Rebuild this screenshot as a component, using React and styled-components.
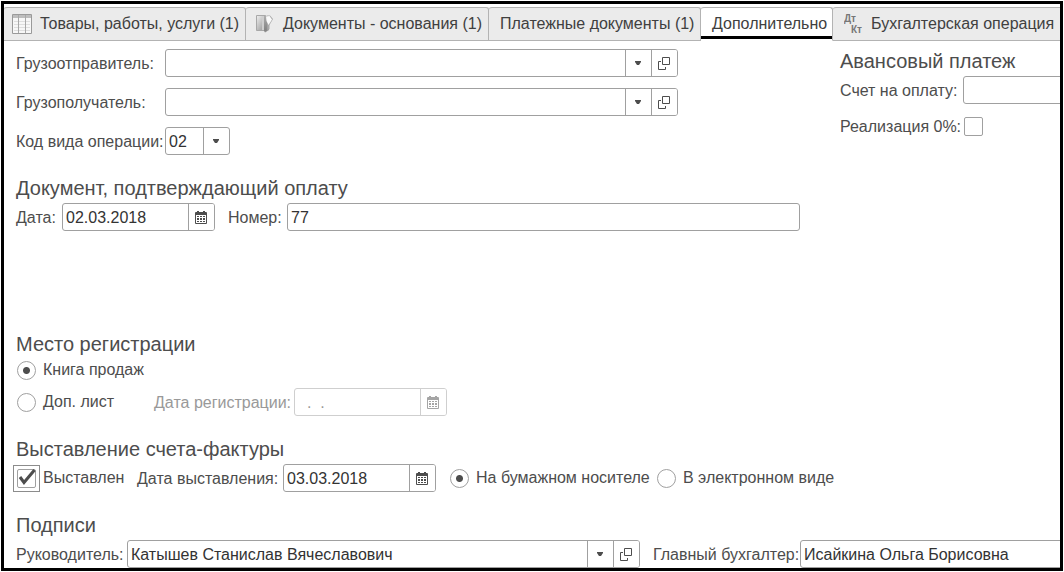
import React from "react";
import styled, { createGlobalStyle, css } from "styled-components";

const line = "#a0a0a0";
const tabLine = "#b3b3b3";
const ink = "#4d4d4d";

const GlobalStyle = createGlobalStyle`
  *, *::before, *::after { box-sizing: border-box; }
  body {
    margin: 0;
    background: #fff;
    color: ${ink};
    font: 16px/20px "Liberation Sans", Arial, sans-serif;
  }
  input, select, button { font: inherit; color: inherit; margin: 0; }
`;

const Frame = styled.main`
  margin: 1px;
  border: 3px solid #000;
  padding-top: 3px;
  overflow: hidden;
`;

const Tabs = styled.nav`
  display: flex;
  height: 34px;
  background: #ebebeb;
`;

const Tab = styled.button`
  display: flex;
  align-items: center;
  flex: none;
  gap: 8px;
  width: ${(p) => p.$w}px;
  padding: 0 0 0 ${(p) => (p.$icon ? 8 : 11)}px;
  border: 1px solid ${tabLine};
  border-left: 0;
  border-radius: 3px 3px 0 0;
  background: #ebebeb;
  color: #404040;
  white-space: nowrap;
  ${(p) =>
    p.$active &&
    css`
      background: #fff;
      border-bottom-color: #fff;
      box-shadow: inset 0 -1px #fff, inset 0 -4px #000;
    `}
`;

const Body = styled.form`
  display: flex;
  flex-direction: column;
  gap: 21px;
  padding: 8px 0 0 12px;
`;

const Top = styled.div`
  display: grid;
  grid-template-columns: minmax(0, 785px) 220px;
  column-gap: 39px;
`;

const Stack = styled.div`
  display: flex;
  flex-direction: column;
  gap: ${(p) => p.$gap || 0}px;
`;

const Section = styled.section`
  margin-bottom: ${(p) => (p.$spacious ? 80 : 0)}px;
`;

const Heading = styled.h2`
  margin: 0 0 ${(p) => (p.$tight ? 0 : 3)}px;
  font-size: 20px;
  font-weight: 400;
  line-height: 24px;
  white-space: nowrap;
`;

const Row = styled.div`
  display: flex;
  align-items: center;
  height: 28px;
`;

const Label = styled.label`
  flex: none;
  width: ${(p) => (p.$w ? `${p.$w}px` : "auto")};
  padding-top: 1px;
  white-space: nowrap;
  color: ${(p) => (p.$off ? "#999" : ink)};
`;

const Field = styled.div`
  display: flex;
  flex: 0 ${(p) => (p.$fixed ? 0 : 1)} ${(p) => p.$w || 513}px;
  min-width: 0;
  height: 28px;
  margin-right: 13px;
  border: 1px solid ${line};
  border-radius: 3px;
  background: #fff;
  color: ${ink};
  overflow: hidden;
  ${(p) => p.$off && css`opacity: 0.5;`}
`;

const Input = styled.input`
  flex: 1;
  min-width: 0;
  border: 0;
  padding: 1px 3px 0;
  outline: 0;
  background: transparent;
  color: #333;
`;

const FieldButton = styled.button`
  display: flex;
  flex: none;
  align-items: center;
  justify-content: center;
  width: 26px;
  padding: 0;
  border: 0;
  border-left: 1px solid ${line};
  background: #fff;
`;

const SelectBox = styled.div`
  display: grid;
  grid-template-columns: 1fr 26px;
  width: 65px;
  height: 28px;
  border: 1px solid ${line};
  border-radius: 3px;
`;

const Select = styled.select`
  grid-area: 1 / 1 / 2 / 3;
  appearance: none;
  border: 0;
  padding: 1px 3px 0;
  background: transparent;
  color: #333;
`;

const SelectArrow = styled.span`
  grid-area: 1 / 2;
  display: flex;
  align-items: center;
  justify-content: center;
  border-left: 1px solid ${line};
  pointer-events: none;
`;

const Choice = styled.label`
  display: flex;
  flex: none;
  align-items: center;
  gap: 7px;
  width: ${(p) => (p.$w ? `${p.$w}px` : "auto")};
  padding-left: 1px;
  white-space: nowrap;
`;

const Radio = styled.input.attrs({ type: "radio" })`
  appearance: none;
  flex: none;
  width: 19px;
  height: 19px;
  border: 1px solid ${line};
  border-radius: 50%;
  background: #fff;
  &:checked {
    background: radial-gradient(circle, ${ink} 3px, #fff 4px);
  }
`;

const CheckWrap = styled.span`
  display: grid;
  width: 19px;
  height: 19px;
  flex: none;
  outline: 1px solid #8c8c8c;
  outline-offset: 3px;
  & > * { grid-area: 1 / 1; }
  svg { pointer-events: none; }
`;

const Check = styled.input.attrs({ type: "checkbox" })`
  appearance: none;
  width: 19px;
  height: 19px;
  border: 1px solid ${line};
  border-radius: 2px;
  background: #fff;
`;

const Arrow = () => (
  <svg width="7" height="4" viewBox="0 0 7 4" aria-hidden="true">
    <path d="M0 0h6v1L4 4H2L0 1z" fill={ink} />
  </svg>
);

const OpenIcon = () => (
  <svg width="13" height="13" viewBox="0 0 13 13" fill="none" stroke={ink} aria-hidden="true">
    <path d="M4.500 .5h7v7h-7zM3 4.500H.5v8h7V10" />
  </svg>
);

const CalendarIcon = () => (
  <svg width="14" height="13" viewBox="0 0 14 13" aria-hidden="true">
    <path d="M2 0h2v1h4V0h2v1h1a1 1 0 0 1 1 1v10a1 1 0 0 1-1 1H1a1 1 0 0 1-1-1V2a1 1 0 0 1 1-1h1z" fill={ink} />
    <path d="M1 4h10v8H1z" fill="#fff" />
    <path d="M2 5h2v1H2zM5 5h2v1H5zM8 5h2v1H8zM2 7h2v2H2zM5 7h2v2H5zM8 7h2v2H8zM2 10h2v1H2zM5 10h2v1H5zM8 10h2v1H8z" fill={ink} />
  </svg>
);

const TableIcon = () => (
  <svg width="20" height="20" viewBox="0 0 20 20" aria-hidden="true">
    <path d="M.5.500h19v19H.5z" fill="#f7f7f7" stroke="#9a9a9a" />
    <path d="M1 1h18v3H1z" fill="#bdbdbd" />
    <path d="M2 7.500h16M2 10.500h16M2 13.500h16M2 16.500h16" stroke="#dedede" />
    <path d="M6.500 1v18M13.500 1v18" stroke="#a8a8a8" />
  </svg>
);

const FoldersIcon = () => (
  <svg width="21" height="20" viewBox="0 0 21 20" aria-hidden="true">
    <defs>
      <linearGradient id="folder" x1="0" y1="0" x2="1" y2="1">
        <stop offset="0" stopColor="#f0f0f0" />
        <stop offset="1" stopColor="#8e8e8e" />
      </linearGradient>
      <linearGradient id="spine" x1="0" y1="0" x2="0" y2="1">
        <stop offset="0" stopColor="#a8a8a8" />
        <stop offset="1" stopColor="#777" />
      </linearGradient>
    </defs>
    <path d="M2.500 1.500h9l1 1v14h-10z" fill="url(#folder)" stroke="#a8a8a8" />
    <path d="M8 2h4l3 6v8l-4 2.500-1-1.500z" fill="url(#spine)" opacity="0.8" />
    <path d="M8 2h2v14H8z" fill="#cfcfcf" />
    <path d="M12.500 1.500h3.500l3 3.500-3.500 6v4l-2 1.500V9z" fill="#a9a9a9" />
    <path d="M12 2.500l3.500-.5 2.500 3.500-3.500 5.500-2-4z" fill="#fafafa" />
  </svg>
);

const PostingIcon = () => (
  <svg width="19" height="20" viewBox="0 0 19 20" fill="#777" fontSize="10" fontWeight="700" aria-hidden="true">
    <text x="0" y="8">Дт</text>
    <text x="7" y="19">Кт</text>
  </svg>
);

const Tick = () => (
  <svg width="19" height="19" viewBox="0 0 19 19" aria-hidden="true">
    <path d="M3 8l4 5.500L17.500 1" fill="none" stroke={ink} strokeWidth="3" />
  </svg>
);

function LookupField({ id, value = "", fixed }) {
  return (
    <Field $fixed={fixed}>
      <Input id={id} defaultValue={value} />
      <FieldButton type="button" aria-label="Выбрать из списка"><Arrow /></FieldButton>
      <FieldButton type="button" aria-label="Открыть"><OpenIcon /></FieldButton>
    </Field>
  );
}

function DateField({ id, value, disabled }) {
  return (
    <Field $w={153} $fixed $off={disabled}>
      <Input id={id} defaultValue={value} disabled={disabled} />
      <FieldButton type="button" disabled={disabled} aria-label="Календарь"><CalendarIcon /></FieldButton>
    </Field>
  );
}

export default function App() {
  return (
    <>
      <GlobalStyle />
      <Frame>
        <Tabs>
          <Tab $w={242} $icon><TableIcon />Товары, работы, услуги (1)</Tab>
          <Tab $w={243} $icon><FoldersIcon />Документы - основания (1)</Tab>
          <Tab $w={212}>Платежные документы (1)</Tab>
          <Tab $w={132} $active>Дополнительно</Tab>
          <Tab $w={232}><PostingIcon />Бухгалтерская операция</Tab>
        </Tabs>
        <Body>
          <Top>
            <Stack $gap={11}>
              <Row>
                <Label htmlFor="shipper" $w={149}>Грузоотправитель:</Label>
                <LookupField id="shipper" />
              </Row>
              <Row>
                <Label htmlFor="consignee" $w={149}>Грузополучатель:</Label>
                <LookupField id="consignee" />
              </Row>
              <Row>
                <Label htmlFor="code" $w={149}>Код вида операции:</Label>
                <SelectBox>
                  <Select id="code" defaultValue="02"><option>01</option><option>02</option></Select>
                  <SelectArrow><Arrow /></SelectArrow>
                </SelectBox>
              </Row>
            </Stack>
            <div>
              <Heading>Авансовый платеж</Heading>
              <Stack $gap={8}>
                <Row>
                  <Label htmlFor="invoice" $w={123}>Счет на оплату:</Label>
                  <LookupField id="invoice" fixed />
                </Row>
                <Row>
                  <Label htmlFor="zero" $w={124}>Реализация 0%:</Label>
                  <Check id="zero" />
                </Row>
              </Stack>
            </div>
          </Top>

          <Section $spacious>
            <Heading>Документ, подтверждающий оплату</Heading>
            <Row>
              <Label htmlFor="pay-date" $w={46}>Дата:</Label>
              <DateField id="pay-date" value="02.03.2018" />
              <Label htmlFor="pay-number" $w={59}>Номер:</Label>
              <Field><Input id="pay-number" defaultValue="77" /></Field>
            </Row>
          </Section>

          <Section>
            <Heading $tight>Место регистрации</Heading>
            <Stack $gap={4}>
              <Row>
                <Choice><Radio name="place" defaultChecked />Книга продаж</Choice>
              </Row>
              <Row>
                <Choice $w={138}><Radio name="place" />Доп. лист</Choice>
                <Label htmlFor="reg-date" $w={140} $off>Дата регистрации:</Label>
                <DateField id="reg-date" value="  .  ." disabled />
              </Row>
            </Stack>
          </Section>

          <Section>
            <Heading>Выставление счета-фактуры</Heading>
            <Row>
              <Choice $w={121}>
                <CheckWrap><Check defaultChecked /><Tick /></CheckWrap>
                Выставлен
              </Choice>
              <Label htmlFor="issue-date" $w={146}>Дата выставления:</Label>
              <DateField id="issue-date" value="03.03.2018" />
              <Choice $w={207}><Radio name="medium" defaultChecked />На бумажном носителе</Choice>
              <Choice><Radio name="medium" />В электронном виде</Choice>
            </Row>
          </Section>

          <Section>
            <Heading>Подписи</Heading>
            <Row>
              <Label htmlFor="head" $w={111}>Руководитель:</Label>
              <LookupField id="head" value="Катышев Станислав Вячеславович" fixed />
              <Label htmlFor="accountant" $w={147}>Главный бухгалтер:</Label>
              <LookupField id="accountant" value="Исайкина Ольга Борисовна" fixed />
            </Row>
          </Section>
        </Body>
      </Frame>
    </>
  );
}
